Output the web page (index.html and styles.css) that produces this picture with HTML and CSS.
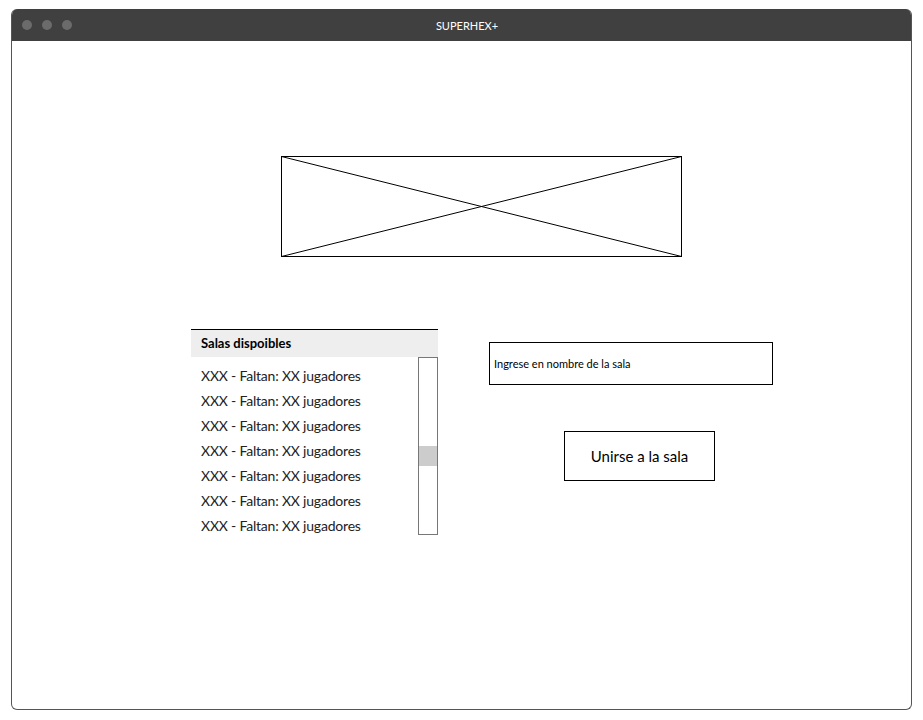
FILE: index.html
```html
<!DOCTYPE html>
<html>
<head>
    <meta charset="UTF-8">
    <title>SUPERHEX+</title>
    <link rel="stylesheet" href="styles.css">
</head>
<body>
    <div class="window">
        <div class="titlebar">
            <div class="dots">
                <span class="dot"></span>
                <span class="dot"></span>
                <span class="dot"></span>
            </div>
            <div class="title">SUPERHEX+</div>
        </div>

        <div class="content">
            <div class="placeholder">
                <svg width="401" height="101" viewBox="0 0 401 101">
                    <rect x="0.5" y="0.5" width="400" height="100" fill="#fff" stroke="#000" stroke-width="1"/>
                    <line x1="0.5" y1="0.5" x2="400.5" y2="100.5" stroke="#000" stroke-width="1"/>
                    <line x1="0.5" y1="100.5" x2="400.5" y2="0.5" stroke="#000" stroke-width="1"/>
                </svg>
            </div>

            <div class="lobby">
                <div class="rooms">
                    <div class="rooms-header">Salas dispoibles</div>
                    <div class="rooms-body">
                        <ul class="room-list">
                            <li>XXX - Faltan: XX jugadores</li>
                            <li>XXX - Faltan: XX jugadores</li>
                            <li>XXX - Faltan: XX jugadores</li>
                            <li>XXX - Faltan: XX jugadores</li>
                            <li>XXX - Faltan: XX jugadores</li>
                            <li>XXX - Faltan: XX jugadores</li>
                            <li>XXX - Faltan: XX jugadores</li>
                        </ul>
                        <div class="scrollbar">
                            <div class="thumb"></div>
                        </div>
                    </div>
                </div>

                <div class="join">
                    <div class="name-input">Ingrese en nombre de la sala</div>
                    <div class="join-button">Unirse a la sala</div>
                </div>
            </div>
        </div>
    </div>
</body>
</html>
```

FILE: styles.css
```css
body {
    margin: 0;
    background: #fff;
    font-family: Lato, "Open Sans", sans-serif;
    color: #000;
}
.window {
    margin: 9px 0 0 11px;
    width: 899px;
    height: 700px;
    border: 1px solid #555;
    border-top: none;
    border-radius: 6px;
    overflow: hidden;
    box-sizing: content-box;
}
.titlebar {
    height: 32px;
    background: #404040;
    display: flex;
    align-items: center;
    position: relative;
    margin: 0 -1px;
}
.dots {
    display: flex;
    gap: 10px;
    padding-left: 11px;
}
.dot {
    width: 10px;
    height: 10px;
    border-radius: 50%;
    background: #6b6b6b;
}
.title {
    position: absolute;
    left: 0;
    right: 0;
    text-align: center;
    color: #fff;
    font-size: 11px;
    padding-left: 11px;
}
.placeholder {
    margin: 115px 0 0 269px;
    height: 101px;
}
.placeholder svg {
    display: block;
}
.lobby {
    display: flex;
    align-items: flex-start;
    margin: 72px 0 0 179px;
}
.rooms {
    width: 247px;
    border-top: 1px solid #000;
}
.rooms-header {
    height: 27px;
    line-height: 26px;
    background: #eeeeee;
    padding-left: 10px;
    font-weight: bold;
    font-size: 13px;
}
.rooms-body {
    display: flex;
}
.room-list {
    flex: 1;
    list-style: none;
    margin: 0;
    padding: 6px 0 0 10px;
}
.room-list li {
    height: 25px;
    line-height: 25px;
    font-size: 14px;
    letter-spacing: -0.2px;
    color: #222;
}
.scrollbar {
    width: 18px;
    height: 176px;
    border: 1px solid #777;
}
.thumb {
    margin-top: 88px;
    height: 20px;
    background: #cccccc;
}
.join {
    margin: 13px 0 0 51px;
}
.name-input {
    width: 278px;
    height: 41px;
    border: 1px solid #000;
    padding-left: 4px;
    line-height: 41px;
    font-size: 11px;
}
.join-button {
    width: 149px;
    height: 48px;
    margin: 46px 0 0 75px;
    border: 1px solid #000;
    text-align: center;
    line-height: 48px;
    font-size: 15px;
}
```
